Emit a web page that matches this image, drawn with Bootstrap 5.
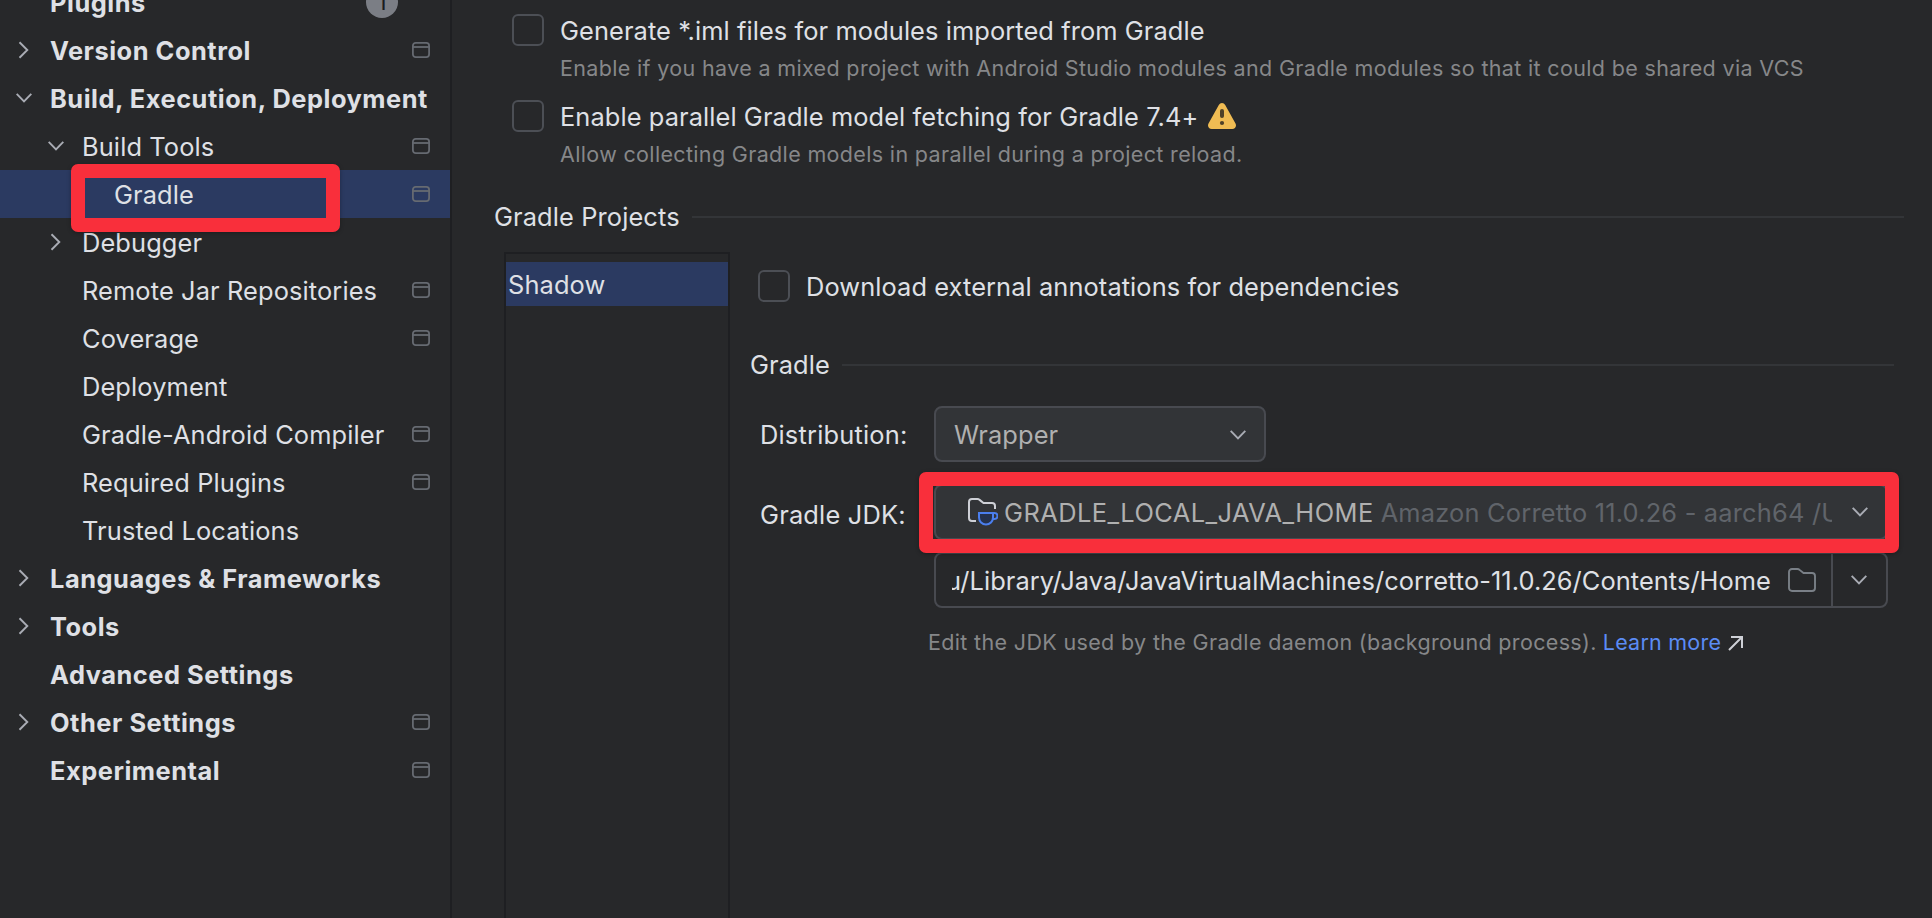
<!DOCTYPE html>
<html lang="en" data-bs-theme="dark">
<head>
<meta charset="utf-8">
<meta name="viewport" content="width=device-width, initial-scale=1">
<title>Settings – Gradle</title>
<link rel="stylesheet" href="https://cdn.jsdelivr.net/npm/bootstrap@5.3.0/dist/css/bootstrap.min.css">
<style>
  body { background: #27282a; color: #dfe0e5; font-family: Inter, "Liberation Sans", sans-serif; font-size: 25.4px; letter-spacing: .12px; line-height: 34px; height: 918px; }
  svg { display: block; flex: none; fill: none; }
  .tree { width: 452px; border-right: 2px solid #1e1f22; margin-top: -22px; }
  .tree-row { height: 48px; padding-right: 20px; }
  .tree-row.sel { background: #2b3a61; }
  .tree-row .label-text { padding-top: 1px; white-space: nowrap; }
  .tree-row.top .label-text { font-weight: 700; letter-spacing: .53px; }
  .arrow { width: 16px; margin: 0 18px 0 16px; flex: none; }
  .lvl1 .arrow { margin-left: 48px; }
  .lvl2 .arrow { margin-left: 80px; }
  .stroke-arrow { stroke: #a9acb4; stroke-width: 1.9; }
  .win { stroke: #666a71; stroke-width: 1.8; }
  .count { width: 32px; height: 32px; margin-right: 32px; background: #7b7e85; color: #1b1c1e; font-size: 23px; line-height: 32px; }
  .outline { position: absolute; border: 14px solid #f92f3b; border-radius: 7px; z-index: 3; pointer-events: none; box-shadow: 0 1px 4px rgba(0,0,0,.3); }
  .outline-tree { left: 71px; top: -6px; width: 269px; height: 68px; }
  .outline-jdk { left: -17px; top: -14px; width: 980px; height: 81px; }
  .content-pane { padding: 14px 28px 0 42px; }
  .tick { width: 32px; height: 32px; border: 2px solid #4c4f55; border-radius: 6px; flex: none; }
  .tick-row { height: 32px; gap: 16px; }
  .tick-row .label-text { padding-top: 2px; letter-spacing: .09px; }
  .tick-option { padding-left: 18px; }
  .warn { margin-left: -6px; margin-top: -1px; }
  .note { color: #868789; font-size: 21.5px; letter-spacing: .345px; line-height: 32px; white-space: nowrap; }
  .option-note { margin: 6px 0 16px 66px; }
  .section-title { height: 34px; gap: 12px; }
  .projects-title { margin-top: 30px; }
  .projects-body { margin-top: 18px; }
  .gradle-title { margin: 46px 10px 24px 0; }
  .rule { height: 2px; background: #333538; }
  .projects { width: 226px; border: 2px solid #1e1f22; border-bottom: 0; padding-top: 8px; margin-left: 10px; }
  .project-item { height: 44px; line-height: 46px; padding-left: 2px; background: #2b3a61; }
  .detail { margin-left: 20px; padding-top: 18px; }
  .field { padding-left: 10px; }
  .field-jdk { margin-top: 22px; }
  .field-label { width: 174px; flex: none; padding-top: 2px; letter-spacing: .2px; }
  .field-jdk .field-label { padding-top: 6px; }
  .combo { height: 56px; border: 2px solid #484a50; border-radius: 8px; background: #323437; color: #b0b0b0; }
  .combo-wrapper { width: 332px; padding: 1px 18px 0 18px; }
  .combo-jdk { width: 954px; padding: 0 18px 0 32px; }
  .combo-path { width: 954px; background: transparent; color: #dfe0e5; margin: 12px 0 0 184px; }
  .jdk-text { margin: 1px 20px 0 6px; }
  .jdk-name { letter-spacing: .45px; margin-right: 7px; }
  .version-text { color: #60646a; letter-spacing: .2px; }
  .path-text { width: 819px; letter-spacing: .06px; margin-left: 16px; padding-top: 2px; }
  .browse { margin-left: 17px; }
  .split-line { width: 2px; background: #484a50; margin: 0 18px 0 15px; }
  .jdk-note { margin: 18px 0 0 178px; }
  .learn { color: #5b8cf5; text-decoration: none; margin-left: 6px; letter-spacing: .22px; }
  .ext { stroke: #ced0d6; stroke-width: 2; margin: 2px 0 0 7px; }
</style>
</head>
<body class="overflow-hidden d-flex">

<svg width="0" height="0" class="position-absolute">
  <symbol id="right" viewBox="0 0 16 18"><path d="M3.500 1.300 11.300 9 3.500 16.700"/></symbol>
  <symbol id="down" viewBox="0 0 16 10"><path d="M.7.8 8 8.300 15.300.8"/></symbol>
  <symbol id="window" viewBox="0 0 18 16"><rect x=".9" y=".9" width="16.200" height="14.200" rx="2.800"/><path d="M1 5h16"/></symbol>
</svg>

<nav class="tree flex-shrink-0">
  <div class="tree-row top d-flex align-items-center"><span class="arrow"></span><span class="label-text">Plugins</span><span class="count rounded-circle text-center ms-auto">1</span></div>
  <div class="tree-row top d-flex align-items-center"><svg class="arrow stroke-arrow" height="18"><use href="#right"/></svg><span class="label-text">Version Control</span><svg class="win ms-auto" width="18" height="16"><use href="#window"/></svg></div>
  <div class="tree-row top d-flex align-items-center"><svg class="arrow stroke-arrow" height="10"><use href="#down"/></svg><span class="label-text">Build, Execution, Deployment</span></div>
  <div class="tree-row lvl1 d-flex align-items-center"><svg class="arrow stroke-arrow" height="10"><use href="#down"/></svg><span class="label-text">Build Tools</span><svg class="win ms-auto" width="18" height="16"><use href="#window"/></svg></div>
  <div class="tree-row lvl2 sel position-relative d-flex align-items-center"><span class="arrow"></span><span class="label-text">Gradle</span><svg class="win ms-auto" width="18" height="16"><use href="#window"/></svg><span class="outline outline-tree"></span></div>
  <div class="tree-row lvl1 d-flex align-items-center"><svg class="arrow stroke-arrow" height="18"><use href="#right"/></svg><span class="label-text">Debugger</span></div>
  <div class="tree-row lvl1 d-flex align-items-center"><span class="arrow"></span><span class="label-text">Remote Jar Repositories</span><svg class="win ms-auto" width="18" height="16"><use href="#window"/></svg></div>
  <div class="tree-row lvl1 d-flex align-items-center"><span class="arrow"></span><span class="label-text">Coverage</span><svg class="win ms-auto" width="18" height="16"><use href="#window"/></svg></div>
  <div class="tree-row lvl1 d-flex align-items-center"><span class="arrow"></span><span class="label-text">Deployment</span></div>
  <div class="tree-row lvl1 d-flex align-items-center"><span class="arrow"></span><span class="label-text">Gradle-Android Compiler</span><svg class="win ms-auto" width="18" height="16"><use href="#window"/></svg></div>
  <div class="tree-row lvl1 d-flex align-items-center"><span class="arrow"></span><span class="label-text">Required Plugins</span><svg class="win ms-auto" width="18" height="16"><use href="#window"/></svg></div>
  <div class="tree-row lvl1 d-flex align-items-center"><span class="arrow"></span><span class="label-text">Trusted Locations</span></div>
  <div class="tree-row top d-flex align-items-center"><svg class="arrow stroke-arrow" height="18"><use href="#right"/></svg><span class="label-text">Languages &amp; Frameworks</span></div>
  <div class="tree-row top d-flex align-items-center"><svg class="arrow stroke-arrow" height="18"><use href="#right"/></svg><span class="label-text">Tools</span></div>
  <div class="tree-row top d-flex align-items-center"><span class="arrow"></span><span class="label-text">Advanced Settings</span></div>
  <div class="tree-row top d-flex align-items-center"><svg class="arrow stroke-arrow" height="18"><use href="#right"/></svg><span class="label-text">Other Settings</span><svg class="win ms-auto" width="18" height="16"><use href="#window"/></svg></div>
  <div class="tree-row top d-flex align-items-center"><span class="arrow"></span><span class="label-text">Experimental</span><svg class="win ms-auto" width="18" height="16"><use href="#window"/></svg></div>
</nav>

<main class="content-pane flex-grow-1 d-flex flex-column">
  <div class="tick-row tick-option d-flex align-items-center"><span class="tick"></span><span class="label-text">Generate *.iml files for modules imported from Gradle</span></div>
  <div class="note option-note">Enable if you have a mixed project with Android Studio modules and Gradle modules so that it could be shared via VCS</div>
  <div class="tick-row tick-option d-flex align-items-center"><span class="tick"></span><span class="label-text">Enable parallel Gradle model fetching for Gradle 7.4+</span>
    <svg class="warn" width="28" height="26" viewBox="0 0 28 26"><path fill="#f0bc53" d="M10.800 1.900a3.700 3.700 0 0 1 6.400 0l10.300 18.700c1.400 2.500-.4 5.400-3.200 5.400H3.700c-2.800 0-4.600-2.900-3.200-5.400z"/><rect x="12" y="6" width="4" height="9" rx="2" fill="#4f4128"/><circle cx="14" cy="20" r="2.100" fill="#4f4128"/></svg>
  </div>
  <div class="note option-note mb-0">Allow collecting Gradle models in parallel during a project reload.</div>

  <div class="section-title projects-title d-flex align-items-center"><span>Gradle Projects</span><span class="rule flex-grow-1"></span></div>

  <div class="projects-body d-flex flex-grow-1">
    <div class="projects flex-shrink-0"><div class="project-item">Shadow</div></div>
    <section class="detail flex-grow-1">
      <div class="tick-row d-flex align-items-center ps-2"><span class="tick"></span><span class="label-text">Download external annotations for dependencies</span></div>
      <div class="section-title gradle-title d-flex align-items-center"><span>Gradle</span><span class="rule flex-grow-1"></span></div>

      <div class="field d-flex align-items-center">
        <span class="field-label">Distribution:</span>
        <div class="combo combo-wrapper d-flex align-items-center justify-content-between"><span>Wrapper</span><svg class="stroke-arrow" width="16" height="10"><use href="#down"/></svg></div>
      </div>

      <div class="field field-jdk d-flex align-items-center">
        <span class="field-label">Gradle JDK:</span>
        <div class="combo combo-jdk position-relative d-flex align-items-center">
          <svg width="30" height="28" viewBox="0 0 30 28"><path stroke="#ced0d6" stroke-width="2" d="M8 23H4a3 3 0 0 1-3-3V4a3 3 0 0 1 3-3h5.500c.9 0 1.500.3 2.100.9L15.500 5H24a3 3 0 0 1 3 3v3"/><path fill="#25324d" stroke="#4b7fee" stroke-width="2" d="M11 15h14v4.500a7 7 0 0 1-14 0z"/><path stroke="#4b7fee" stroke-width="2" d="M25 15h1.500a2.500 2.500 0 0 1 0 6H25"/></svg>
          <span class="jdk-text d-flex overflow-hidden text-nowrap flex-grow-1"><span class="jdk-name">GRADLE_LOCAL_JAVA_HOME</span><span class="version-text">Amazon Corretto 11.0.26 - aarch64 /U</span></span>
          <svg class="stroke-arrow" width="16" height="10"><use href="#down"/></svg>
          <span class="outline outline-jdk"></span>
        </div>
      </div>

      <div class="combo combo-path d-flex align-items-center">
        <span class="path-text d-flex justify-content-end overflow-hidden text-nowrap">u/Library/Java/JavaVirtualMachines/corretto-11.0.26/Contents/Home</span>
        <svg class="browse" width="28" height="24" viewBox="0 0 28 24"><path stroke="#7a8087" stroke-width="1.900" d="M1 4a3 3 0 0 1 3-3h5.500c.8 0 1.500.3 2.100.9L15.500 5H24a3 3 0 0 1 3 3v12a3 3 0 0 1-3 3H4a3 3 0 0 1-3-3z"/></svg>
        <span class="split-line align-self-stretch"></span>
        <svg class="stroke-arrow" width="16" height="10"><use href="#down"/></svg>
      </div>

      <div class="note jdk-note d-flex align-items-center"><span>Edit the JDK used by the Gradle daemon (background process).</span><a class="learn" href="#">Learn more</a>
        <svg class="ext" width="15" height="15" viewBox="0 0 15 15"><path d="M3 1h11v11M14 1 1 14"/></svg>
      </div>
    </section>
  </div>
</main>
<script src="https://cdn.jsdelivr.net/npm/bootstrap@5.3.0/dist/js/bootstrap.bundle.min.js"></script>
</body>
</html>
